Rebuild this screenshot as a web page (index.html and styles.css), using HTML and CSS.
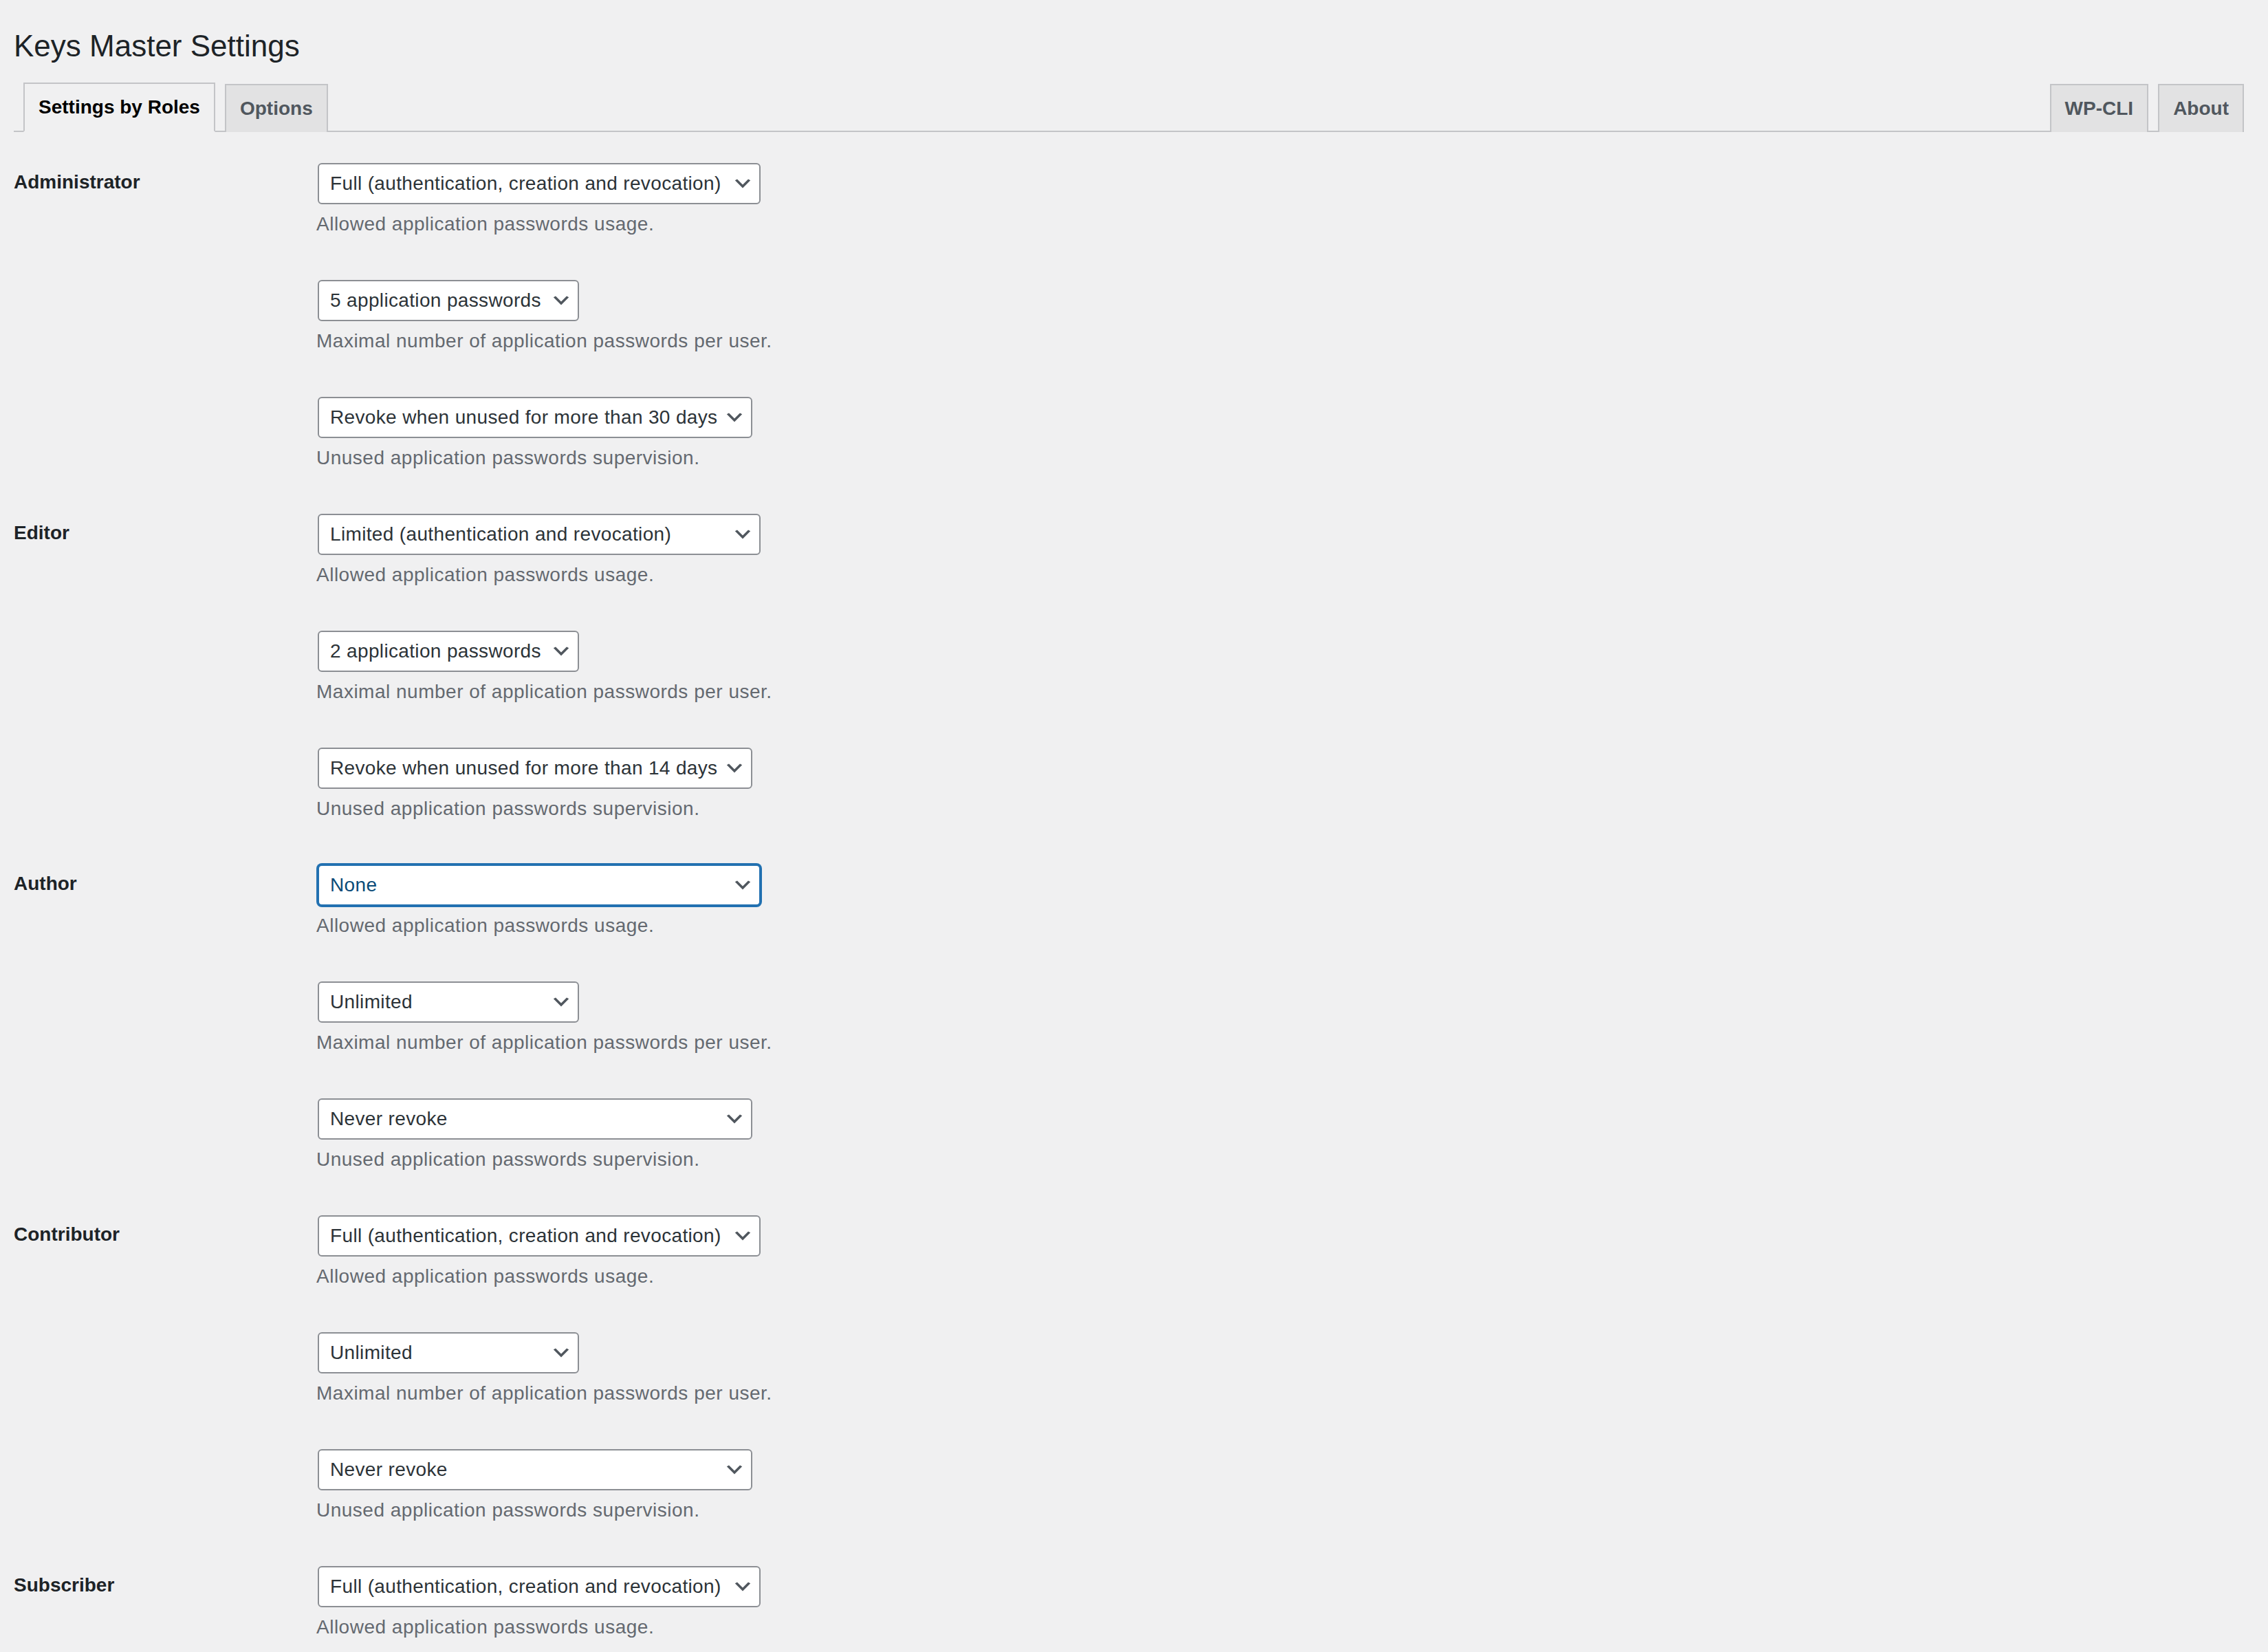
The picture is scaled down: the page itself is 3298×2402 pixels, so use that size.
FILE: index.html
```html
<!DOCTYPE html>
<html lang="en">
<head>
    <meta charset="UTF-8">
    <meta name="viewport" content="width=device-width, initial-scale=1.0">
    <title>Keys Master Settings</title>
    <link rel="stylesheet" href="styles.css">
</head>
<body>
    <div class="wrap">
        <h1>Keys Master Settings</h1>
        <nav class="nav-tabs">
            <a class="nav-tab nav-tab-active">Settings by Roles</a>
            <a class="nav-tab">Options</a>
            <a class="nav-tab nav-tab-right">WP-CLI</a>
            <a class="nav-tab">About</a>
        </nav>

        <form class="settings">
            <!-- Administrator -->
            <div class="role">
                <div class="role-name">Administrator</div>
                <div class="fields">
                    <div class="field">
                        <div class="select-wrap">
                            <select class="usage">
                                <option>None</option>
                                <option>Limited (authentication and revocation)</option>
                                <option selected>Full (authentication, creation and revocation)</option>
                            </select>
                            <svg class="chev" viewBox="0 0 20 20"><path d="M5 6l5 5 5-5 2 1-7 7-7-7 2-1z"/></svg>
                        </div>
                        <p class="desc">Allowed application passwords usage.</p>
                    </div>
                    <div class="field">
                        <div class="select-wrap">
                            <select class="count">
                                <option>Unlimited</option>
                                <option>2 application passwords</option>
                                <option selected>5 application passwords</option>
                            </select>
                            <svg class="chev" viewBox="0 0 20 20"><path d="M5 6l5 5 5-5 2 1-7 7-7-7 2-1z"/></svg>
                        </div>
                        <p class="desc">Maximal number of application passwords per user.</p>
                    </div>
                    <div class="field">
                        <div class="select-wrap">
                            <select class="revoke">
                                <option>Never revoke</option>
                                <option>Revoke when unused for more than 14 days</option>
                                <option selected>Revoke when unused for more than 30 days</option>
                            </select>
                            <svg class="chev" viewBox="0 0 20 20"><path d="M5 6l5 5 5-5 2 1-7 7-7-7 2-1z"/></svg>
                        </div>
                        <p class="desc">Unused application passwords supervision.</p>
                    </div>
                </div>
            </div>

            <!-- Editor -->
            <div class="role">
                <div class="role-name">Editor</div>
                <div class="fields">
                    <div class="field">
                        <div class="select-wrap">
                            <select class="usage">
                                <option>None</option>
                                <option selected>Limited (authentication and revocation)</option>
                                <option>Full (authentication, creation and revocation)</option>
                            </select>
                            <svg class="chev" viewBox="0 0 20 20"><path d="M5 6l5 5 5-5 2 1-7 7-7-7 2-1z"/></svg>
                        </div>
                        <p class="desc">Allowed application passwords usage.</p>
                    </div>
                    <div class="field">
                        <div class="select-wrap">
                            <select class="count">
                                <option>Unlimited</option>
                                <option selected>2 application passwords</option>
                                <option>5 application passwords</option>
                            </select>
                            <svg class="chev" viewBox="0 0 20 20"><path d="M5 6l5 5 5-5 2 1-7 7-7-7 2-1z"/></svg>
                        </div>
                        <p class="desc">Maximal number of application passwords per user.</p>
                    </div>
                    <div class="field">
                        <div class="select-wrap">
                            <select class="revoke">
                                <option>Never revoke</option>
                                <option selected>Revoke when unused for more than 14 days</option>
                                <option>Revoke when unused for more than 30 days</option>
                            </select>
                            <svg class="chev" viewBox="0 0 20 20"><path d="M5 6l5 5 5-5 2 1-7 7-7-7 2-1z"/></svg>
                        </div>
                        <p class="desc">Unused application passwords supervision.</p>
                    </div>
                </div>
            </div>

            <!-- Author -->
            <div class="role">
                <div class="role-name">Author</div>
                <div class="fields">
                    <div class="field">
                        <div class="select-wrap">
                            <select class="usage is-focus">
                                <option selected>None</option>
                                <option>Limited (authentication and revocation)</option>
                                <option>Full (authentication, creation and revocation)</option>
                            </select>
                            <svg class="chev" viewBox="0 0 20 20"><path d="M5 6l5 5 5-5 2 1-7 7-7-7 2-1z"/></svg>
                        </div>
                        <p class="desc">Allowed application passwords usage.</p>
                    </div>
                    <div class="field">
                        <div class="select-wrap">
                            <select class="count">
                                <option selected>Unlimited</option>
                                <option>2 application passwords</option>
                                <option>5 application passwords</option>
                            </select>
                            <svg class="chev" viewBox="0 0 20 20"><path d="M5 6l5 5 5-5 2 1-7 7-7-7 2-1z"/></svg>
                        </div>
                        <p class="desc">Maximal number of application passwords per user.</p>
                    </div>
                    <div class="field">
                        <div class="select-wrap">
                            <select class="revoke">
                                <option selected>Never revoke</option>
                                <option>Revoke when unused for more than 14 days</option>
                                <option>Revoke when unused for more than 30 days</option>
                            </select>
                            <svg class="chev" viewBox="0 0 20 20"><path d="M5 6l5 5 5-5 2 1-7 7-7-7 2-1z"/></svg>
                        </div>
                        <p class="desc">Unused application passwords supervision.</p>
                    </div>
                </div>
            </div>

            <!-- Contributor -->
            <div class="role">
                <div class="role-name">Contributor</div>
                <div class="fields">
                    <div class="field">
                        <div class="select-wrap">
                            <select class="usage">
                                <option>None</option>
                                <option>Limited (authentication and revocation)</option>
                                <option selected>Full (authentication, creation and revocation)</option>
                            </select>
                            <svg class="chev" viewBox="0 0 20 20"><path d="M5 6l5 5 5-5 2 1-7 7-7-7 2-1z"/></svg>
                        </div>
                        <p class="desc">Allowed application passwords usage.</p>
                    </div>
                    <div class="field">
                        <div class="select-wrap">
                            <select class="count">
                                <option selected>Unlimited</option>
                                <option>2 application passwords</option>
                                <option>5 application passwords</option>
                            </select>
                            <svg class="chev" viewBox="0 0 20 20"><path d="M5 6l5 5 5-5 2 1-7 7-7-7 2-1z"/></svg>
                        </div>
                        <p class="desc">Maximal number of application passwords per user.</p>
                    </div>
                    <div class="field">
                        <div class="select-wrap">
                            <select class="revoke">
                                <option selected>Never revoke</option>
                                <option>Revoke when unused for more than 14 days</option>
                                <option>Revoke when unused for more than 30 days</option>
                            </select>
                            <svg class="chev" viewBox="0 0 20 20"><path d="M5 6l5 5 5-5 2 1-7 7-7-7 2-1z"/></svg>
                        </div>
                        <p class="desc">Unused application passwords supervision.</p>
                    </div>
                </div>
            </div>

            <!-- Subscriber -->
            <div class="role">
                <div class="role-name">Subscriber</div>
                <div class="fields">
                    <div class="field">
                        <div class="select-wrap">
                            <select class="usage">
                                <option>None</option>
                                <option>Limited (authentication and revocation)</option>
                                <option selected>Full (authentication, creation and revocation)</option>
                            </select>
                            <svg class="chev" viewBox="0 0 20 20"><path d="M5 6l5 5 5-5 2 1-7 7-7-7 2-1z"/></svg>
                        </div>
                        <p class="desc">Allowed application passwords usage.</p>
                    </div>
                </div>
            </div>
        </form>
    </div>
</body>
</html>
```

FILE: styles.css
```css
html{
    background-color: #f0f0f1;
}
body{
    margin: 0;
    font-family: "Liberation Sans", Arial, sans-serif;
    color: #3c434a;
    background-color: #f0f0f1;
}
.wrap{
    padding: 0 35px 0 20px;
}
h1{
    margin: 0;
    padding: 38px 0 8px 0;
    font-size: 44px;
    font-weight: 400;
    line-height: 1.3;
    color: #1d2327;
}

/* tabs */
.nav-tabs{
    display: flex;
    align-items: flex-end;
    padding-top: 17px;
    border-bottom: 2px solid #c3c4c7;
}
.nav-tab{
    margin-left: 14px;
    margin-bottom: -2px;
    padding: 10px 20px;
    border: 2px solid #c3c4c7;
    border-bottom: none;
    background-color: #e2e2e3;
    color: #50575e;
    font-size: 28px;
    font-weight: 700;
    line-height: 48px;
    text-decoration: none;
    white-space: nowrap;
}
.nav-tab-active{
    background-color: #f0f0f1;
    color: #000;
    border-bottom: 2px solid #f0f0f1;
}
.nav-tab-right{
    margin-left: auto;
}

/* settings table */
.settings{
    margin-top: 15px;
}
.role{
    display: grid;
    grid-template-columns: 420px 1fr;
}
.role-name{
    padding: 40px 20px 40px 0;
    font-size: 28px;
    font-weight: 700;
    line-height: 1.3;
    color: #1d2327;
}
.field{
    padding: 30px 20px;
}
.select-wrap{
    position: relative;
    width: max-content;
}
select{
    display: block;
    box-sizing: border-box;
    -webkit-appearance: none;
    appearance: none;
    height: 60px;
    margin: 0 2px;
    padding: 0 40px 0 16px;
    border: 2px solid #8c8f94;
    border-radius: 6px;
    background-color: #fff;
    color: #2c3338;
    font-family: "Liberation Sans", Arial, sans-serif;
    font-size: 28px;
    letter-spacing: 0.35px;
    line-height: 56px;
    outline: none;
}
select.usage{
    width: 644px;
}
select.count{
    width: 380px;
}
select.revoke{
    width: 632px;
}
select.is-focus{
    border-color: #2271b1;
    color: #0a4b78;
    box-shadow: 0 0 0 2px #2271b1;
}
.chev{
    position: absolute;
    right: 12px;
    top: 50%;
    width: 32px;
    height: 32px;
    margin-top: -16px;
    fill: #50575e;
    pointer-events: none;
}
.desc{
    margin: 8px 0 0 0;
    font-size: 28px;
    letter-spacing: 0.5px;
    line-height: 42px;
    color: #646970;
}
```
